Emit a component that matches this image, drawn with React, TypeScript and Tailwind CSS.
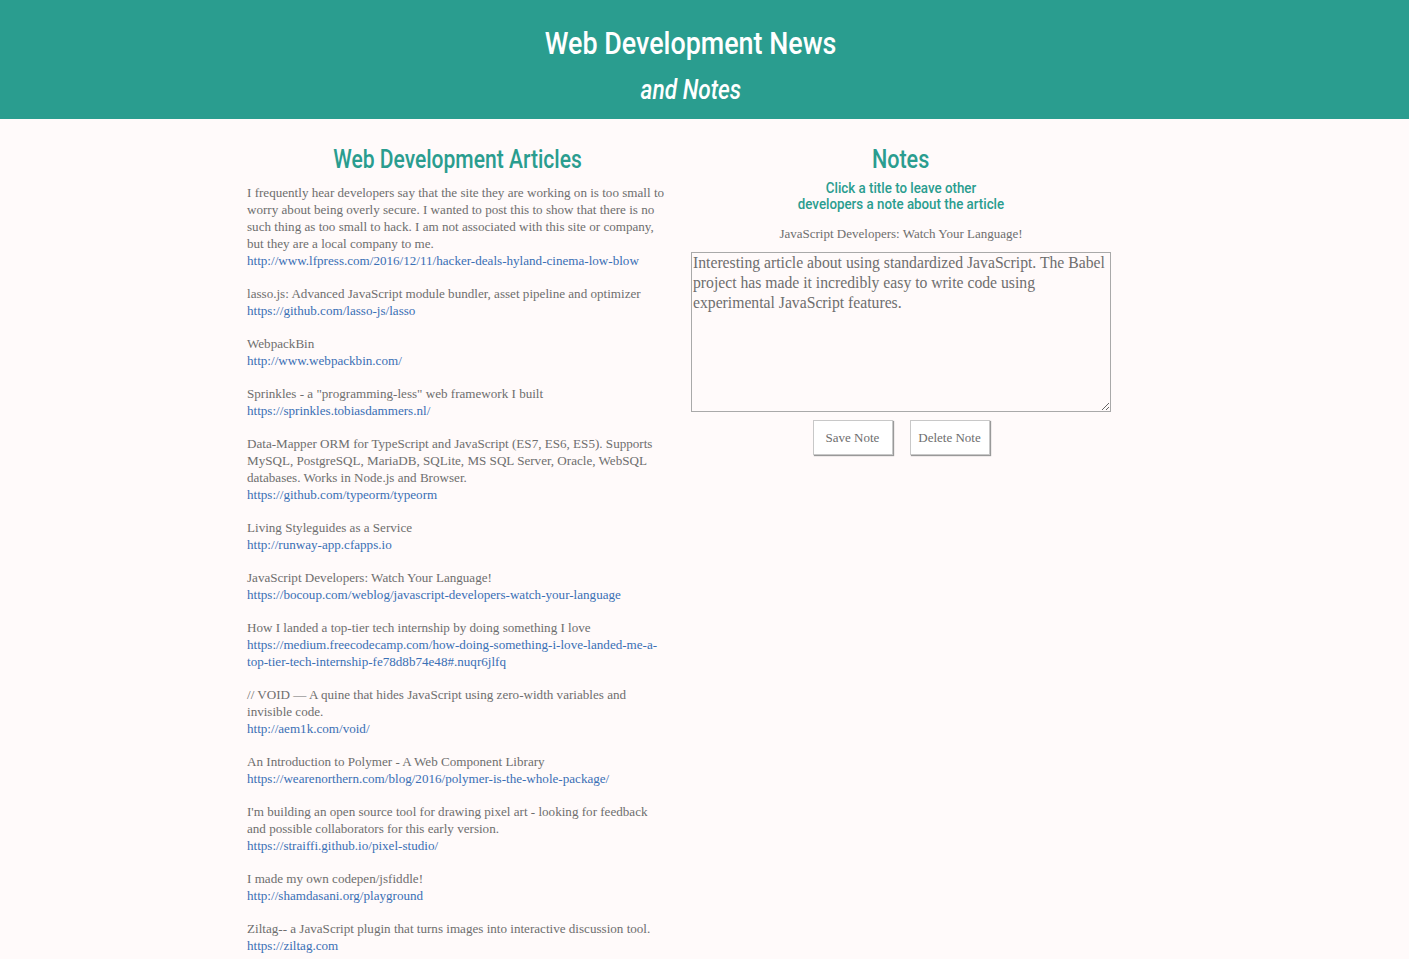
import { useState } from "react";

const articles = [
  {
    title:
      "I frequently hear developers say that the site they are working on is too small to worry about being overly secure. I wanted to post this to show that there is no such thing as too small to hack. I am not associated with this site or company, but they are a local company to me.",
    link: "http://www.lfpress.com/2016/12/11/hacker-deals-hyland-cinema-low-blow",
  },
  {
    title: "lasso.js: Advanced JavaScript module bundler, asset pipeline and optimizer",
    link: "https://github.com/lasso-js/lasso",
  },
  { title: "WebpackBin", link: "http://www.webpackbin.com/" },
  {
    title: 'Sprinkles - a "programming-less" web framework I built',
    link: "https://sprinkles.tobiasdammers.nl/",
  },
  {
    title:
      "Data-Mapper ORM for TypeScript and JavaScript (ES7, ES6, ES5). Supports MySQL, PostgreSQL, MariaDB, SQLite, MS SQL Server, Oracle, WebSQL databases. Works in Node.js and Browser.",
    link: "https://github.com/typeorm/typeorm",
  },
  { title: "Living Styleguides as a Service", link: "http://runway-app.cfapps.io" },
  {
    title: "JavaScript Developers: Watch Your Language!",
    link: "https://bocoup.com/weblog/javascript-developers-watch-your-language",
  },
  {
    title: "How I landed a top-tier tech internship by doing something I love",
    link: "https://medium.freecodecamp.com/how-doing-something-i-love-landed-me-a-top-tier-tech-internship-fe78d8b74e48#.nuqr6jlfq",
  },
  {
    title: "// VOID — A quine that hides JavaScript using zero-width variables and invisible code.",
    link: "http://aem1k.com/void/",
  },
  {
    title: "An Introduction to Polymer - A Web Component Library",
    link: "https://wearenorthern.com/blog/2016/polymer-is-the-whole-package/",
  },
  {
    title:
      "I'm building an open source tool for drawing pixel art - looking for feedback and possible collaborators for this early version.",
    link: "https://straiffi.github.io/pixel-studio/",
  },
  { title: "I made my own codepen/jsfiddle!", link: "http://shamdasani.org/playground" },
  {
    title: "Ziltag-- a JavaScript plugin that turns images into interactive discussion tool.",
    link: "https://ziltag.com",
  },
];

// condensed look for the headings: Roboto squeezed horizontally
const headingFont = "font-['Roboto',sans-serif] font-medium";
const bodyFont = "font-['Liberation_Serif',serif]";

export default function App() {
  const [selected] = useState("JavaScript Developers: Watch Your Language!");
  const [note, setNote] = useState(
    "Interesting article about using standardized JavaScript. The Babel project has made it incredibly easy to write code using experimental JavaScript features."
  );

  return (
    <div className="min-h-screen bg-[#fffafa]">
      <header className={`h-[119px] bg-[#2a9d8f] pr-[28px] pt-[23px] text-center text-white ${headingFont}`}>
        <h1 className="text-[32px] leading-[40px]">
          <span className="inline-block scale-x-[0.84]">Web Development News</span>
        </h1>
        <h2 className="mt-[11px] text-[27px] leading-[32px] italic">
          <span className="inline-block scale-x-[0.84]">and Notes</span>
        </h2>
      </header>

      <div className="ml-[247px] flex gap-[24px] pt-[23px]">
        <section className="w-[420px]">
          <h3 className={`text-center text-[26px] leading-[34px] text-[#2a9d8f] ${headingFont}`}>
            <span className="inline-block scale-x-[0.81]">Web Development Articles</span>
          </h3>
          <ul className={`mt-[8px] text-[13.1px] leading-[17px] text-[#6e6e6e] ${bodyFont}`}>
            {articles.map((a) => (
              <li key={a.link} className="mb-[16px] break-words">
                <p>{a.title}</p>
                <a href={a.link} className="text-[#3a6fb5]">
                  {a.link}
                </a>
              </li>
            ))}
          </ul>
        </section>

        <section className="flex w-[420px] flex-col items-center">
          <h3 className={`text-[26px] leading-[34px] text-[#2a9d8f] ${headingFont}`}>
            <span className="inline-block scale-x-[0.83]">Notes</span>
          </h3>
          <div className={`mt-[4px] text-center text-[15.5px] leading-[16px] text-[#2a9d8f] ${headingFont}`}>
            <p className="scale-x-[0.86]">Click a title to leave other</p>
            <p className="scale-x-[0.86]">developers a note about the article</p>
          </div>
          <p className={`mt-[13px] text-[13px] leading-[17px] text-[#6e6e6e] ${bodyFont}`}>{selected}</p>
          <textarea
            value={note}
            onChange={(e) => setNote(e.target.value)}
            className={`mt-[10px] h-[160px] w-[420px] border border-[#a9a9a9] bg-[#fffafa] px-[1px] text-[15.7px] leading-[20px] text-[#6e6e6e] outline-none ${bodyFont}`}
          />
          <div className="mt-[8px] flex gap-[17px]">
            <button
              className={`h-[35px] w-[80px] border border-[#c8c8c8] bg-white text-[13px] text-[#6e6e6e] shadow-[1px_1px_1px_#999] ${bodyFont}`}
            >
              Save Note
            </button>
            <button
              className={`h-[35px] w-[80px] border border-[#c8c8c8] bg-white text-[13px] text-[#6e6e6e] shadow-[1px_1px_1px_#999] ${bodyFont}`}
            >
              Delete Note
            </button>
          </div>
        </section>
      </div>
    </div>
  );
}
